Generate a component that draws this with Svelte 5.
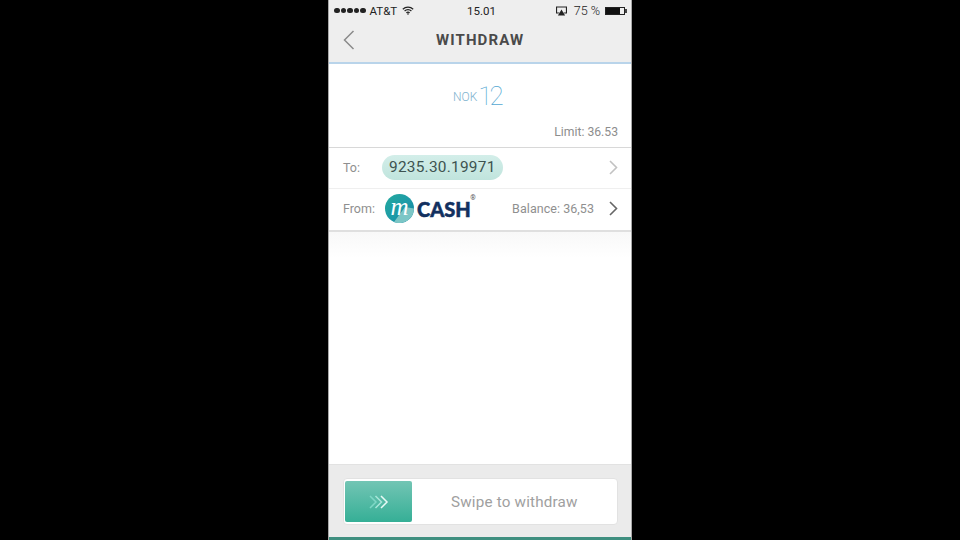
<script>
  const dots = [0, 1, 2, 3, 4];
</script>

<div class="page">
  <div class="phone">
    <header class="top">
      <div class="status">
        <div class="left">
          <span class="dots">{#each dots as d}<i></i>{/each}</span>
          <span class="carrier">AT&amp;T</span>
          <svg class="wifi" width="12" height="9" viewBox="0 0 12 9" fill="none" stroke="#222" stroke-width="1.2">
            <path d="M.8 3.2a7.4 7.4 0 0 1 10.4 0" />
            <path d="M2.6 5a4.8 4.8 0 0 1 6.8 0" />
            <path d="M4.4 6.8a2.2 2.2 0 0 1 3.2 0" />
            <path d="M6 8.9 4.9 7.7a1.6 1.6 0 0 1 2.2 0z" fill="#222" stroke="none" />
          </svg>
        </div>
        <span class="clock">15.01</span>
        <div class="right">
          <svg width="13" height="10" viewBox="0 0 12 10">
            <path d="M.5.5h11v7H9L8 6.4h2.4V1.6H1.6v4.8H4L3 7.5H.5z" fill="#222" />
            <path d="M6 3.6 9.6 9.5H2.4z" fill="#222" />
          </svg>
          <span class="pct">75 %</span>
          <span class="battery"><b></b></span>
        </div>
      </div>
      <div class="nav">
        <svg class="back" width="12" height="20" viewBox="0 0 12 20" fill="none" stroke="#8a8a8a" stroke-width="1.5">
          <path d="M10.5 1 1.5 10l9 9" />
        </svg>
        <h1>WITHDRAW</h1>
      </div>
    </header>

    <main class="content">
      <section class="amount">
        <div class="value"><span class="cur">NOK</span><span class="num">12</span></div>
        <div class="limit">Limit: 36.53</div>
      </section>

      <section class="rows">
        <div class="row to">
          <span class="label">To:</span>
          <span class="pill">9235.30.19971</span>
          <svg class="chev light" width="9" height="15" viewBox="0 0 9 15" fill="none" stroke-width="1.6">
            <path d="M1 1l6.5 6.5L1 14" />
          </svg>
        </div>
        <div class="row from">
          <span class="label">From:</span>
          <span class="logo">
            <span class="disc">
              <svg class="sweep" width="29" height="29" viewBox="0 0 29 29">
                <path d="M29 14.5A14.5 14.5 0 0 1 9 28L20 13z" fill="#7cc6c6" />
              </svg>
              <em>m</em>
            </span>
            <span class="cash">CASH</span>
            <sup>®</sup>
          </span>
          <span class="balance">Balance: 36,53</span>
          <svg class="chev" width="9" height="15" viewBox="0 0 9 15" fill="none" stroke-width="1.6">
            <path d="M1 1l6.5 6.5L1 14" />
          </svg>
        </div>
      </section>
      <div class="shade"></div>
    </main>

    <footer class="bottom">
      <div class="swipe">
        <div class="handle">
          <svg width="20" height="14" viewBox="0 0 20 14" fill="none" stroke-width="1.5">
            <path d="M1 1l6 6-6 6" stroke="#7fd8c6" />
            <path d="M6.5 1l6 6-6 6" stroke="#a9e6da" />
            <path d="M12 1l6 6-6 6" stroke="#e9faf6" />
          </svg>
        </div>
        <span class="hint">Swipe to withdraw</span>
      </div>
    </footer>
  </div>
</div>

<style>
  :global(body) {
    margin: 0;
    background: #000;
  }

  .page {
    width: 960px;
    height: 540px;
    background: #000;
    display: flex;
    justify-content: center;
    overflow: hidden;
  }

  .phone {
    width: 304px;
    height: 540px;
    box-sizing: border-box;
    border-left: 1px solid #a8a8a8;
    border-right: 1px solid #a8a8a8;
    display: flex;
    flex-direction: column;
    background: #fff;
    font-family: Roboto, "Liberation Sans", sans-serif;
    color: #8f8f8f;
  }

  .top {
    height: 64px;
    box-sizing: border-box;
    flex: none;
    background: #eeeeee;
    border-bottom: 2px solid #b9d4ea;
  }

  .status {
    height: 21px;
    padding: 0 4px 0 5px;
    display: flex;
    align-items: center;
    justify-content: space-between;
    position: relative;
    color: #222;
    font-size: 11.5px;
  }

  .left,
  .right {
    display: flex;
    align-items: center;
  }

  .dots {
    display: flex;
    gap: 1px;
    margin-right: 4px;
  }

  .dots i {
    width: 5.5px;
    height: 5.5px;
    border-radius: 50%;
    background: #222;
  }

  .wifi {
    margin-left: 5px;
  }

  .clock {
    position: absolute;
    left: 138px;
    top: 4px;
    letter-spacing: 0;
  }

  .pct {
    margin: 0 5px 0 6px;
    font-size: 12.6px;
    font-weight: 300;
  }

  .battery {
    width: 20px;
    height: 8px;
    border: 1px solid #222;
    box-sizing: border-box;
    position: relative;
    display: block;
    margin-right: 2px;
  }

  .battery b {
    display: block;
    width: 14px;
    height: 6px;
    background: #111;
  }

  .battery::after {
    content: "";
    position: absolute;
    right: -3px;
    top: 1px;
    width: 2px;
    height: 4px;
    background: #444;
  }

  .nav {
    height: 41px;
    display: flex;
    align-items: center;
    position: relative;
    padding-left: 14px;
  }

  .back {
    margin-top: -3px;
  }

  .nav h1 {
    position: absolute;
    left: 107px;
    top: 10px;
    margin: 0;
    font-size: 15px;
    line-height: 18px;
    font-weight: 700;
    letter-spacing: 1.1px;
    color: #4a4a4a;
  }

  .content {
    flex: 1;
    position: relative;
    display: flex;
    flex-direction: column;
    background: #fff;
  }

  .amount {
    height: 84px;
    box-sizing: border-box;
    position: relative;
    border-bottom: 1px solid #d8d8d8;
  }

  .value {
    position: absolute;
    left: 124px;
    top: 17px;
    display: flex;
    align-items: center;
    gap: 1px;
    color: #79bcdc;
  }

  .cur {
    font-size: 12px;
    font-weight: 300;
    color: #7fb3cf;
    margin-top: 1px;
  }

  .num {
    font-size: 26px;
    line-height: 30px;
    font-weight: 100;
    letter-spacing: -3px;
    color: #55a8d2;
  }

  .limit {
    position: absolute;
    right: 13px;
    top: 61px;
    font-size: 12.2px;
    color: #8d8d8d;
  }

  .rows {
    position: relative;
    z-index: 1;
    background: #fff;
    border-bottom: 2px solid #dfdfdf;
  }

  .row {
    display: flex;
    align-items: center;
    padding: 0 13px 0 14px;
    font-size: 12.5px;
  }

  .to {
    height: 40px;
    border-bottom: 1px solid #efefef;
  }

  .from {
    height: 41px;
  }

  .label {
    color: #8f8f8f;
    margin-top: -2px;
  }

  .pill {
    margin-left: 22px;
    height: 25px;
    margin-top: -2px;
    padding: 0 7px;
    border-radius: 13px;
    background: linear-gradient(#d3eee9, #c0e4dd);
    display: flex;
    align-items: center;
    font-size: 15.4px;
    letter-spacing: 0.25px;
    color: #3d5350;
  }

  .chev {
    margin-left: auto;
    margin-top: -2px;
    stroke: #666;
  }

  .chev.light {
    stroke: #c2c2c2;
  }

  .logo {
    margin-left: 10px;
    margin-top: -2px;
    display: flex;
    align-items: center;
    position: relative;
  }

  .disc {
    width: 29px;
    height: 29px;
    border-radius: 50%;
    background: linear-gradient(135deg, #23a99d 0%, #1d9aa8 55%, #0f7d9e 100%);
    display: flex;
    align-items: center;
    justify-content: center;
    position: relative;
  }

  .sweep {
    position: absolute;
    left: 0;
    top: 0;
  }

  .disc em {
    position: relative;
    font-family: "Liberation Serif", serif;
    font-size: 25px;
    line-height: 22px;
    font-style: italic;
    font-weight: 400;
    color: #fff;
    margin-top: -3px;
  }

  .cash {
    margin-left: 3px;
    font-family: Lato, sans-serif;
    font-size: 20px;
    line-height: 24px;
    font-weight: 900;
    letter-spacing: 0;
    -webkit-text-stroke: 0.5px #12305f;
    color: #12305f;
  }

  sup {
    position: absolute;
    right: -5px;
    top: 0;
    font-size: 7px;
    line-height: 8px;
    color: #555;
  }

  .balance {
    margin-left: auto;
    margin-top: -2px;
    margin-right: 15px;
    letter-spacing: 0.05px;
    color: #8f8f8f;
  }

  .balance + .chev {
    margin-left: 0;
  }

  .shade {
    height: 26px;
    background: linear-gradient(#f8f8f8, #fff);
  }

  .bottom {
    height: 76px;
    flex: none;
    box-sizing: border-box;
    background: #ebebeb;
    border-top: 1px solid #e2e2e2;
    border-bottom: 3px solid #3f8f80;
    padding: 13px 13px 0 14px;
  }

  .swipe {
    height: 47px;
    background: #fff;
    border: 1px solid #e2e2e2;
    border-radius: 4px;
    padding: 2px 0 2px 1px;
    box-sizing: border-box;
    display: flex;
    align-items: center;
  }

  .handle {
    width: 67px;
    height: 41px;
    border-radius: 2px;
    background: linear-gradient(#73c5b4, #35af96);
    display: flex;
    align-items: center;
    justify-content: center;
    flex: none;
  }

  .hint {
    margin-left: 39px;
    font-size: 15.2px;
    letter-spacing: 0.2px;
    color: #a0a0a0;
    font-weight: 400;
  }
</style>
